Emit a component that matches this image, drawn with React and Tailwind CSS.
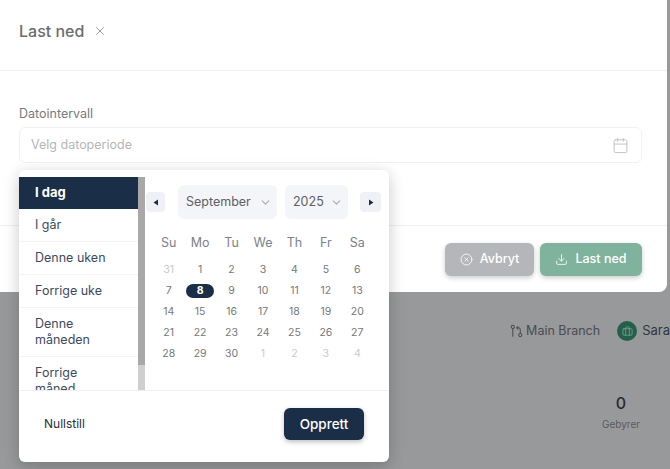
import React from 'react';
import { X, Calendar, ChevronDown, CircleX, Download, Briefcase } from 'lucide-react';

const PRESETS = [
  { label: 'I dag', active: true },
  { label: 'I går' },
  { label: 'Denne uken' },
  { label: 'Forrige uke' },
  { label: 'Denne måneden' },
  { label: 'Forrige måned' },
];

const WEEKDAYS = ['Su', 'Mo', 'Tu', 'We', 'Th', 'Fr', 'Sa'];

const DAYS = [
  ['31', 'out'], ['1'], ['2'], ['3'], ['4'], ['5'], ['6'],
  ['7'], ['8', 'selected'], ['9'], ['10'], ['11'], ['12'], ['13'],
  ['14'], ['15'], ['16'], ['17'], ['18'], ['19'], ['20'],
  ['21'], ['22'], ['23'], ['24'], ['25'], ['26'], ['27'],
  ['28'], ['29'], ['30'], ['1', 'out'], ['2', 'out'], ['3', 'out'], ['4', 'out'],
];

const BranchIcon = () => (
  <svg width="14" height="14" viewBox="0 0 14 14" fill="none" stroke="#4b4c4f" strokeWidth="1.1" strokeLinecap="round">
    <circle cx="3" cy="2.6" r="1.7" />
    <path d="M3 4.3V12.5" />
    <circle cx="11" cy="11.4" r="1.7" />
    <path d="M11 9.7V5.5C11 4.4 10.2 3.6 9 3.6H7.4" />
    <path d="M8.6 2.2L7.2 3.6L8.6 5" />
  </svg>
);

const MonthSelect = ({ value, className }) => (
  <div className={`flex h-[34px] items-center justify-between rounded-md bg-[#f4f5f8] pl-2 pr-[5px] text-[12.5px] text-[#5c5f66] ${className}`}>
    <span>{value}</span>
    <ChevronDown className="h-[13px] w-[13px] text-[#a9acb2]" />
  </div>
);

const ArrowButton = ({ direction, className }) => (
  <button className={`flex h-5 items-center justify-center rounded bg-[#eff1f6] ${className}`}>
    <svg width="6" height="7" viewBox="0 0 6 7" fill="#1b2e47">
      <path d={direction === 'left' ? 'M5 0.5V6.5L0.5 3.5Z' : 'M1 0.5V6.5L5.5 3.5Z'} />
    </svg>
  </button>
);

const DatePopover = () => (
  <div className="absolute left-[19px] top-[170px] flex h-[292px] w-[370px] flex-col rounded-md bg-white shadow-[0_4px_16px_rgba(0,0,0,0.22)]">
    <div className="flex h-[221px] border-b border-[#f0f0f1] pt-[6.5px]">
      <div className="relative flex w-[126px] shrink-0 overflow-hidden">
        <ul className="w-[119px] shrink-0">
          {PRESETS.map((preset) => (
            <li
              key={preset.label}
              className={
                preset.active
                  ? 'flex h-[32px] items-center bg-[#1b2e47] px-4 text-[13px] font-bold text-white'
                  : 'flex min-h-[33px] items-center border-b border-[#f4f4f5] py-2 pl-4 pr-8 text-[12.5px] leading-[16px] text-[#3c4a5f]'
              }
            >
              {preset.label}
            </li>
          ))}
        </ul>
        <div className="w-[7px] shrink-0 bg-[#cfcfcf]">
          <div className="h-[188px] bg-[#a8a8a8]" />
        </div>
      </div>
      <div className="flex flex-1 flex-col pl-px pr-2">
        <div className="flex items-center pt-[8.5px]">
          <ArrowButton direction="left" className="w-[19px]" />
          <MonthSelect value="September" className="ml-[13px] w-[99px]" />
          <MonthSelect value="2025" className="ml-2 w-[63px]" />
          <ArrowButton direction="right" className="ml-3 w-[21px]" />
        </div>
        <div className="ml-[7px] mt-[15px] grid w-[220px] grid-cols-7 self-start text-center">
          {WEEKDAYS.map((day) => (
            <div key={day} className="h-[25px] text-[12.5px] leading-[18px] text-[#7d8188]">{day}</div>
          ))}
          {DAYS.map(([day, state], i) => (
            <div key={i} className="flex h-[21px] items-center justify-center text-[10.5px]">
              {state === 'selected' ? (
                <span className="flex h-[14px] w-[28px] items-center justify-center rounded-full bg-[#1b2e47] font-bold text-white">{day}</span>
              ) : (
                <span className={state === 'out' ? 'text-[#c9cacc]' : 'text-[#75777b]'}>{day}</span>
              )}
            </div>
          ))}
        </div>
      </div>
    </div>
    <div className="flex flex-1 items-start justify-between px-[25px] pt-[17px]">
      <button className="mt-[7px] text-[12px] text-[#2d2f33]">Nullstill</button>
      <button className="h-[32px] w-[80px] rounded-md bg-[#1b2e47] text-[13.5px] font-medium text-white shadow-[0_2px_5px_rgba(0,0,0,0.25)]">Opprett</button>
    </div>
  </div>
);

export default function App() {
  return (
    <div className="relative h-[469px] w-[670px] overflow-hidden bg-[#98999b] font-['Inter',sans-serif]">
      <div className="flex h-[292px] w-[667px] flex-col rounded-br-lg bg-white">
        <div className="flex h-[71px] shrink-0 items-center gap-[9px] border-b border-[#f0f0f1] px-[19px] pb-2">
          <h2 className="text-[16px] font-medium text-[#6b6d70]">Last ned</h2>
          <X className="h-[14px] w-[14px] text-[#8d8f92]" strokeWidth={1.5} />
        </div>
        <div className="flex h-[155px] shrink-0 flex-col border-b border-[#f0f0f1] pl-[19px] pr-[25px] pt-[34px]">
          <label className="h-[22px] text-[12.5px] leading-[18px] text-[#77797c]">Datointervall</label>
          <div className="flex h-[36px] items-center justify-between rounded-md border border-[#f1f1f2] pl-[11px] pr-3">
            <span className="text-[12.5px] text-[#b5b6b8]">Velg datoperiode</span>
            <Calendar className="h-[17px] w-[17px] text-[#c2c3c5]" strokeWidth={1.4} />
          </div>
        </div>
        <div className="flex flex-1 items-start justify-end gap-[6px] pr-[25px] pt-[17px]">
          <button className="flex h-[33px] w-[89px] items-center justify-center gap-[7px] rounded-md bg-[#b5b6ba] text-[12.5px] font-medium text-white shadow-[0_2px_5px_rgba(0,0,0,0.2)]">
            <CircleX className="h-[13px] w-[13px]" strokeWidth={1.5} />
            Avbryt
          </button>
          <button className="flex h-[33px] w-[102px] items-center justify-center gap-[7px] rounded-md bg-[#7fb39e] text-[12.5px] font-medium text-white shadow-[0_2px_5px_rgba(0,0,0,0.2)]">
            <Download className="h-[13px] w-[13px]" strokeWidth={1.5} />
            Last ned
          </button>
        </div>
      </div>

      <div className="flex items-center pl-[510px] pt-[29px] whitespace-nowrap">
        <BranchIcon />
        <span className="ml-[3px] text-[12.5px] text-[#4b4c4f]">Main Branch</span>
        <span className="ml-[17px] flex h-5 w-5 shrink-0 items-center justify-center rounded-full bg-[#246049]">
          <Briefcase className="h-[11px] w-[11px] text-[#8fa99d]" strokeWidth={1.5} />
        </span>
        <span className="ml-[5px] text-[13px] text-[#2e3744]">Sara</span>
      </div>
      <div className="ml-[591px] mt-[52px] flex w-[60px] flex-col items-center">
        <span className="text-[16px] font-medium leading-[20px] text-[#28292b]">0</span>
        <span className="mt-[4px] text-[10px] leading-[14px] text-[#5a5b5e]">Gebyrer</span>
      </div>

      <DatePopover />
    </div>
  );
}
